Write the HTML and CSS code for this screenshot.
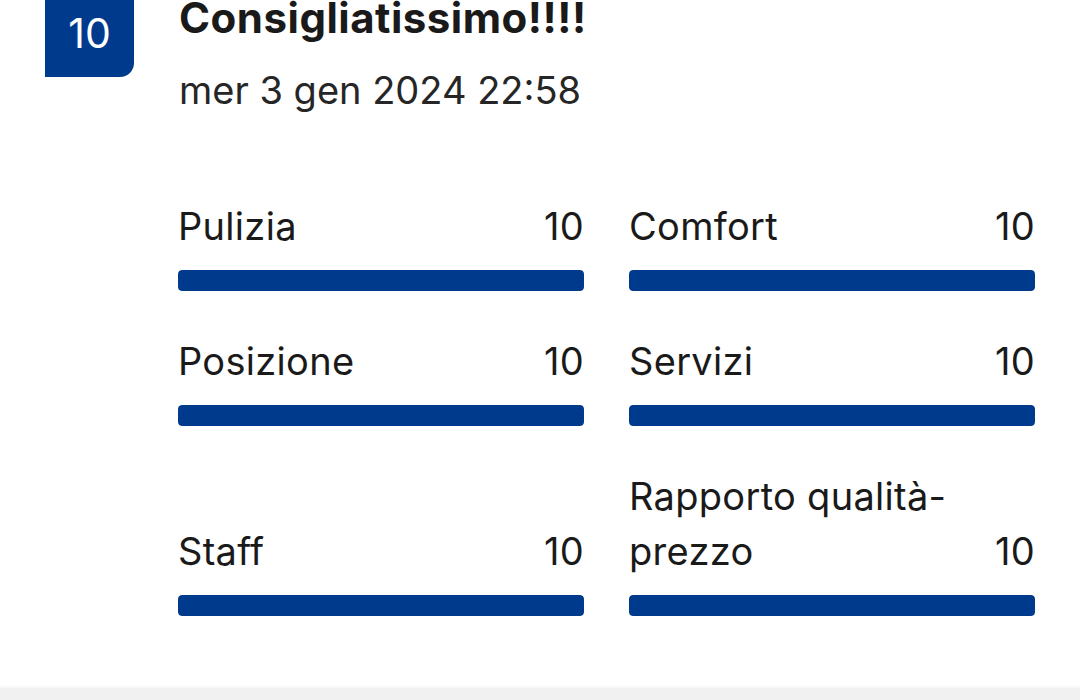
FILE: index.html
```html
<!DOCTYPE html>
<html lang="it">
  <head>
    <meta charset="UTF-8" />
    <meta name="viewport" content="width=device-width, initial-scale=1.0" />
    <title>Recensione</title>
    <link rel="stylesheet" href="styles.css">
  </head>
  <body>
    <div class="review-card">
      <div class="review-head">
        <div class="score-badge">10</div>
        <div class="review-titles">
          <h2 class="review-title">Consigliatissimo!!!!</h2>
          <p class="review-date">mer 3 gen 2024 22:58</p>
        </div>
      </div>

      <div class="ratings">
        <div class="rating">
          <div class="rating-top">
            <span class="rating-name">Pulizia</span>
            <span class="rating-value">10</span>
          </div>
          <div class="rating-bar"><div class="rating-fill" style="width: 100%"></div></div>
        </div>
        <div class="rating">
          <div class="rating-top">
            <span class="rating-name">Comfort</span>
            <span class="rating-value">10</span>
          </div>
          <div class="rating-bar"><div class="rating-fill" style="width: 100%"></div></div>
        </div>
        <div class="rating">
          <div class="rating-top">
            <span class="rating-name">Posizione</span>
            <span class="rating-value">10</span>
          </div>
          <div class="rating-bar"><div class="rating-fill" style="width: 100%"></div></div>
        </div>
        <div class="rating">
          <div class="rating-top">
            <span class="rating-name">Servizi</span>
            <span class="rating-value">10</span>
          </div>
          <div class="rating-bar"><div class="rating-fill" style="width: 100%"></div></div>
        </div>
        <div class="rating">
          <div class="rating-top">
            <span class="rating-name">Staff</span>
            <span class="rating-value">10</span>
          </div>
          <div class="rating-bar"><div class="rating-fill" style="width: 100%"></div></div>
        </div>
        <div class="rating">
          <div class="rating-top">
            <span class="rating-name">Rapporto qualità-prezzo</span>
            <span class="rating-value">10</span>
          </div>
          <div class="rating-bar"><div class="rating-fill" style="width: 100%"></div></div>
        </div>
      </div>
    </div>
    <div class="footer-band"></div>
  </body>
</html>
```

FILE: styles.css
```css
body {
  margin: 0;
  background-color: #fff;
  font-family: Inter, "Noto Sans", sans-serif;
  color: #1a1a1a;
  overflow: hidden;
}

.review-card {
  padding: 0 0 70px 45px;
}
.review-card .review-head {
  display: flex;
  align-items: flex-start;
  gap: 45px;
}
.review-card .score-badge {
  display: flex;
  align-items: center;
  justify-content: center;
  width: 89px;
  height: 88px;
  margin-top: -11px;
  background-color: #003a8c;
  color: #fff;
  font-size: 41px;
  font-weight: 400;
  border-radius: 6px 6px 14px 0;
}
.review-card .review-title {
  margin: 0;
  font-size: 42px;
  line-height: 36px;
  font-weight: 700;
  letter-spacing: 0.5px;
  color: #1a1a1a;
}
.review-card .review-date {
  margin: 32px 0 0 0;
  font-size: 38px;
  line-height: 44px;
  color: #262626;
}

.review-card .ratings {
  display: grid;
  grid-template-columns: 406px 406px;
  column-gap: 45px;
  row-gap: 43px;
  margin: 87px 0 0 133px;
}
.review-card .rating {
  display: flex;
  flex-direction: column;
  justify-content: flex-end;
}
.review-card .rating-top {
  display: flex;
  justify-content: space-between;
  align-items: flex-end;
  gap: 24px;
  font-size: 38px;
  line-height: 55px;
  letter-spacing: 0.3px;
  color: #1a1a1a;
}
.review-card .rating-bar {
  height: 21px;
  margin-top: 16px;
  background-color: #e6e6e6;
  border-radius: 4px;
  overflow: hidden;
}
.review-card .rating-fill {
  height: 100%;
  background-color: #003a8c;
  border-radius: 4px;
}

.footer-band {
  height: 40px;
  background-color: #f1f1f1;
  border-top: 2px solid #f7f7f7;
}
```
